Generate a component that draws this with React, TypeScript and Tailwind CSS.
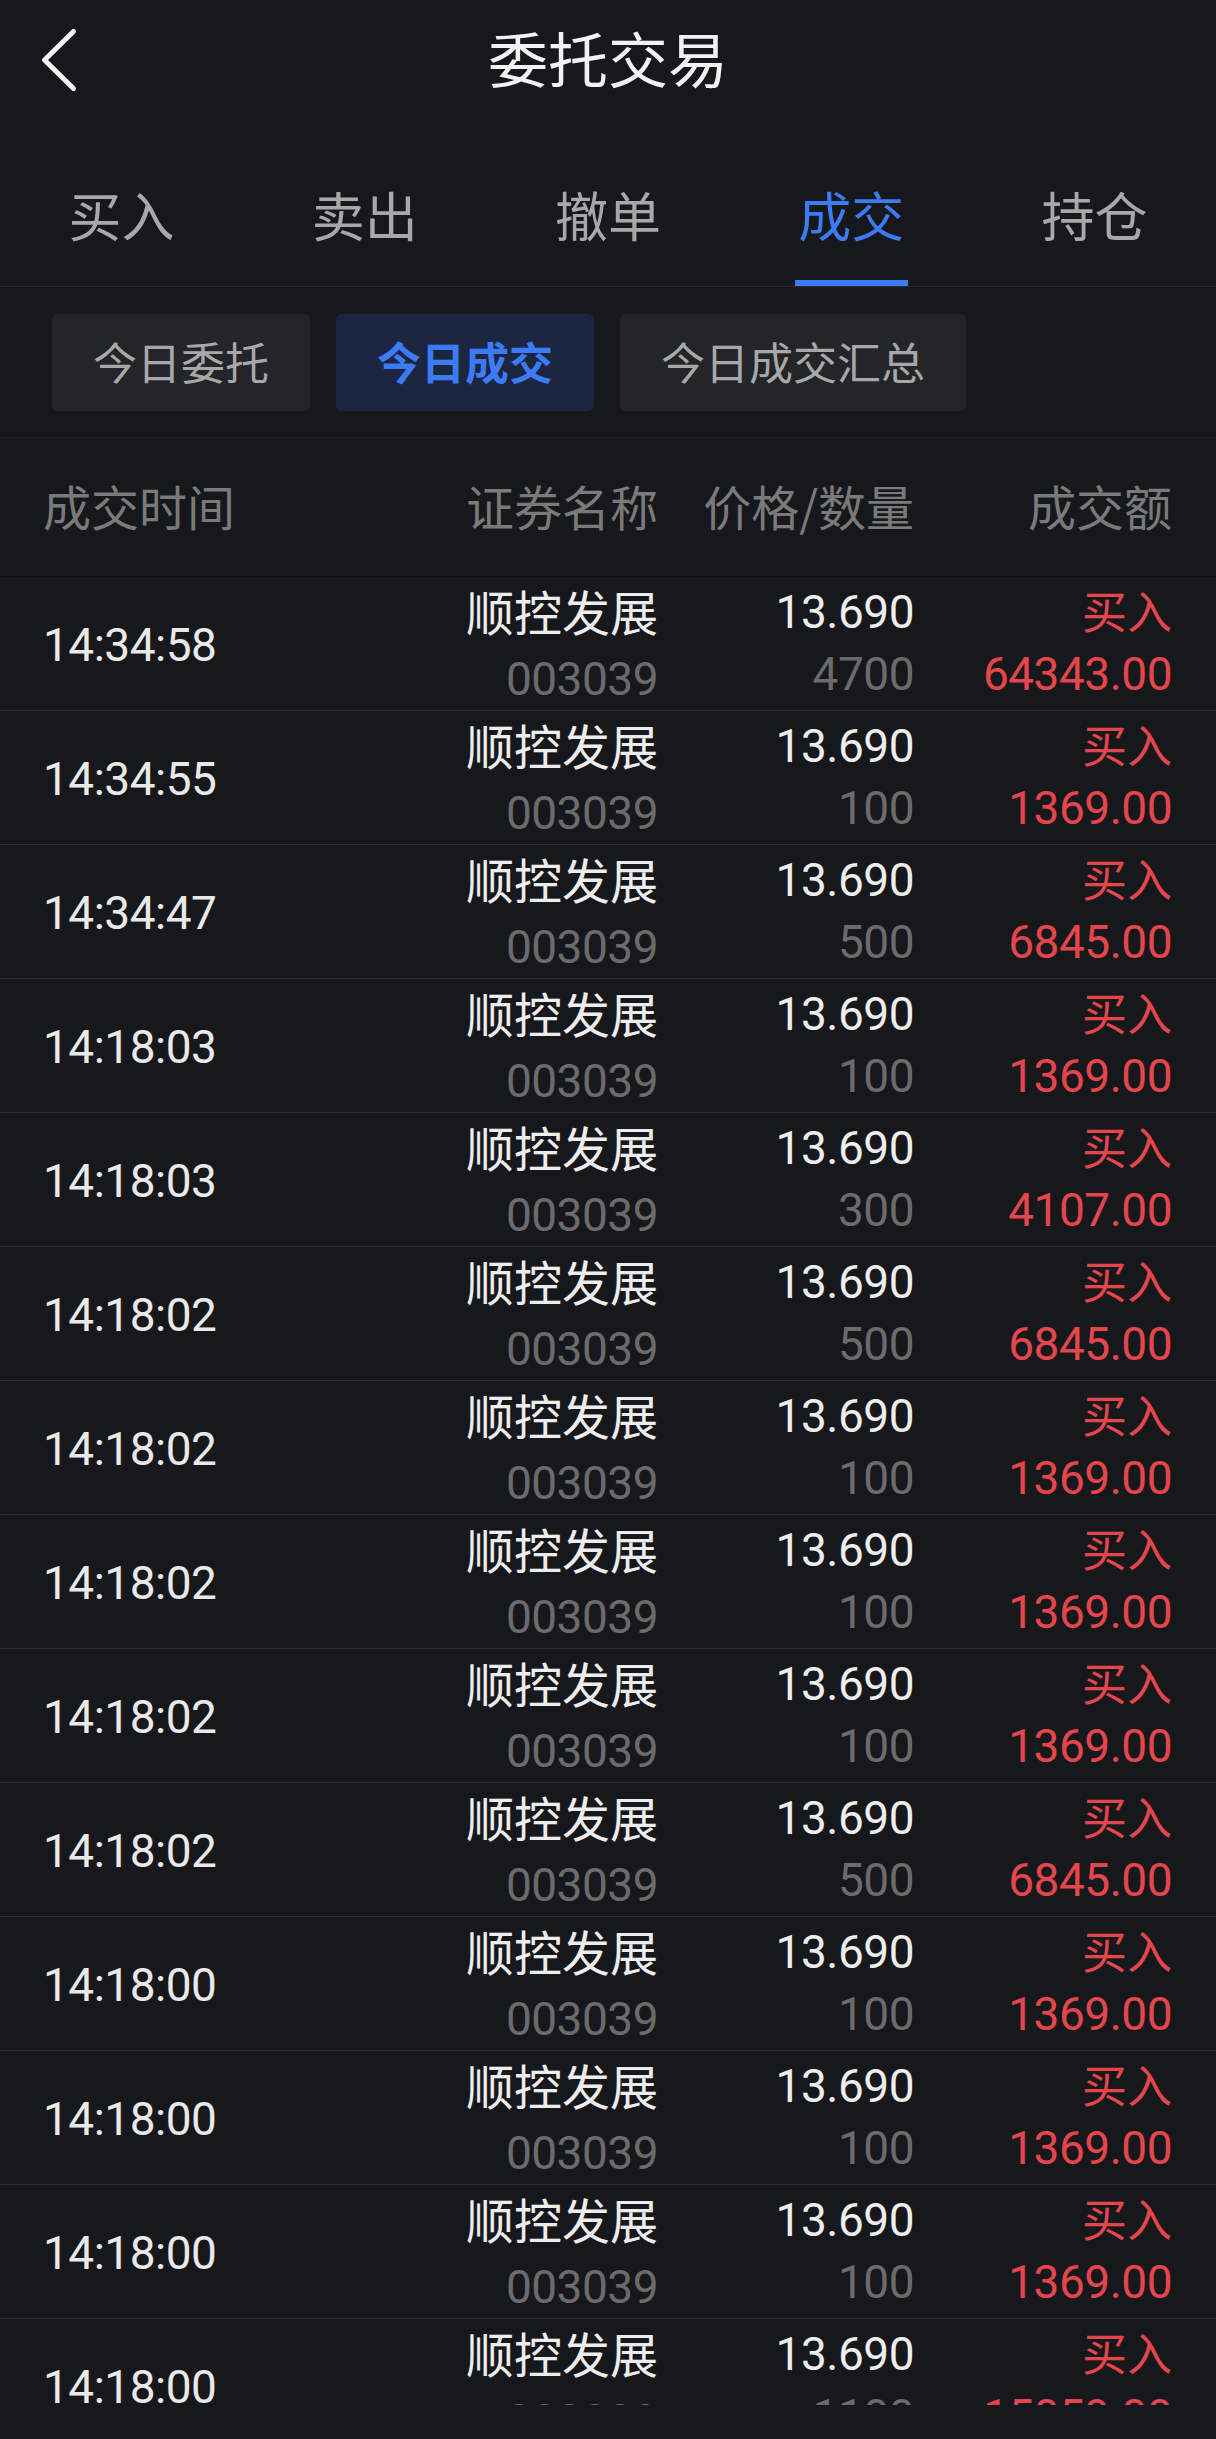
import React from "react";

type Trade = { time: string; qty: string; amount: string };

const trades: Trade[] = [
  { time: "14:34:58", qty: "4700", amount: "64343.00" },
  { time: "14:34:55", qty: "100", amount: "1369.00" },
  { time: "14:34:47", qty: "500", amount: "6845.00" },
  { time: "14:18:03", qty: "100", amount: "1369.00" },
  { time: "14:18:03", qty: "300", amount: "4107.00" },
  { time: "14:18:02", qty: "500", amount: "6845.00" },
  { time: "14:18:02", qty: "100", amount: "1369.00" },
  { time: "14:18:02", qty: "100", amount: "1369.00" },
  { time: "14:18:02", qty: "100", amount: "1369.00" },
  { time: "14:18:02", qty: "500", amount: "6845.00" },
  { time: "14:18:00", qty: "100", amount: "1369.00" },
  { time: "14:18:00", qty: "100", amount: "1369.00" },
  { time: "14:18:00", qty: "100", amount: "1369.00" },
  { time: "14:18:00", qty: "1100", amount: "15059.00" },
];

const tabs = ["买入", "卖出", "撤单", "成交", "持仓"];
const subTabs = ["今日委托", "今日成交", "今日成交汇总"];

function TradeRow({ t }: { t: Trade }) {
  return (
    <div className="grid grid-cols-[365px_250px_256px_258px] pl-[43px] h-[134px] shrink-0 border-b border-[#2c2d31]">
      <div className="flex items-center pt-[3px] font-['Roboto',sans-serif] text-[46px] leading-[46px] tracking-[-0.5px] text-[#e9e9e9]">
        {t.time}
      </div>
      <div className="flex flex-col items-end pt-[9px]">
        <div className="font-['Noto_Sans_CJK_SC',sans-serif] text-[48px] leading-[48px] text-[#ededed]">
          顺控发展
        </div>
        <div className="mt-[22px] font-['Roboto',sans-serif] text-[46px] leading-[46px] tracking-[-0.5px] text-[#6b6b6d]">
          003039
        </div>
      </div>
      <div className="flex flex-col items-end pt-[12px]">
        <div className="font-['Roboto',sans-serif] text-[46px] leading-[46px] tracking-[-0.5px] text-[#ededed]">
          13.690
        </div>
        <div className="mt-[16px] font-['Roboto',sans-serif] text-[46px] leading-[46px] tracking-[-0.5px] text-[#6b6b6d]">
          {t.qty}
        </div>
      </div>
      <div className="flex flex-col items-end pt-[10px]">
        <div className="font-['Noto_Sans_CJK_SC',sans-serif] text-[45px] leading-[45px] text-[#e5464d]">
          买入
        </div>
        <div className="mt-[19px] font-['Roboto',sans-serif] text-[46px] leading-[46px] tracking-[-0.5px] text-[#e5464d]">
          {t.amount}
        </div>
      </div>
    </div>
  );
}

export default function App() {
  return (
    <div className="w-[1216px] h-[2439px] bg-[#17181b] overflow-hidden flex flex-col font-['Noto_Sans_CJK_SC',sans-serif]">
      {/* title bar */}
      <div className="grid grid-cols-[1fr_auto_1fr] items-center h-[120px] shrink-0">
        <div className="pl-[40px] flex items-center">
          <svg width="38" height="66" viewBox="0 0 38 66" fill="none">
            <path
              d="M33.5 4.5 L4.5 33 L33.5 61.5"
              stroke="#f2f2f2"
              strokeWidth="5"
              strokeLinecap="round"
              strokeLinejoin="round"
            />
          </svg>
        </div>
        <div className="text-[60px] leading-[60px] text-[#f2f2f2] pb-[7px]">委托交易</div>
        <div />
      </div>

      {/* main tabs */}
      <div className="grid grid-cols-5 h-[167px] shrink-0 border-b border-[#2a2b2f]">
        {tabs.map((tab) => {
          const active = tab === "成交";
          return (
            <div key={tab} className="flex flex-col items-center justify-end">
              <div
                className={
                  active
                    ? "text-[53px] leading-[53px] text-[#3b7cf4]"
                    : "text-[53px] leading-[53px] text-[#a8a8a8]"
                }
              >
                {tab}
              </div>
              <div
                className={
                  active
                    ? "mt-[39px] h-[6px] w-[113px] bg-[#3b7cf4]"
                    : "mt-[39px] h-[6px] w-[113px] bg-transparent"
                }
              />
            </div>
          );
        })}
      </div>

      {/* sub tabs */}
      <div className="flex gap-[26px] pl-[52px] pt-[27px] pb-[26px] shrink-0 border-b border-[#1e1f22]">
        {subTabs.map((s) => {
          const active = s === "今日成交";
          return (
            <div
              key={s}
              className={
                active
                  ? "h-[97px] px-[41px] pb-[4px] flex items-center rounded-[6px] bg-[#1d2640] text-[44px] leading-[56px] font-bold text-[#3b7cf4]"
                  : "h-[97px] px-[41px] pb-[4px] flex items-center rounded-[6px] bg-[#242529] text-[44px] leading-[56px] text-[#a8a8a8]"
              }
            >
              {s}
            </div>
          );
        })}
      </div>

      {/* header row */}
      <div className="grid grid-cols-[365px_250px_256px_258px] pl-[43px] h-[139px] pb-[4px] shrink-0 items-center border-b border-[#0f1012] text-[48px] leading-[48px] text-[#7a7a7b]">
        <div>成交时间</div>
        <div className="text-right">证券名称</div>
        <div className="text-right">价格/数量</div>
        <div className="text-right">成交额</div>
      </div>

      {/* list */}
      <div className="h-[1828px] shrink-0 overflow-hidden flex flex-col">
        {trades.map((t, i) => (
          <TradeRow key={i} t={t} />
        ))}
      </div>
    </div>
  );
}
